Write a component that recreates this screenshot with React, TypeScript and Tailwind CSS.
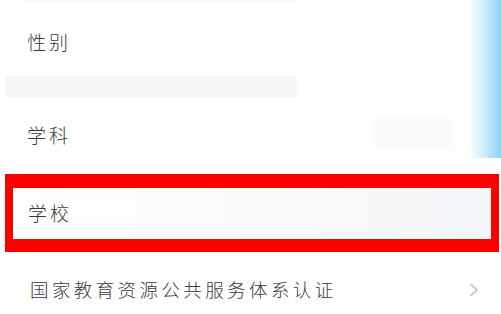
export default function App() {
    const font = { fontFamily: '"Noto Sans CJK SC", "Noto Sans", sans-serif' };
    return (
        <div className="relative w-[501px] h-[314px] overflow-hidden bg-white text-[#3a3a3a]" style={font}>
            {/* top band left from previous section */}
            <div className="ml-[25px] w-[272px] h-[2px] bg-[#f7f7f8]" />

            <div className="h-[74px] flex items-center pt-[6px] pl-[27px] text-[19px] font-light tracking-[3px]">
                性别
            </div>

            <div className="ml-[5px] w-[292px] h-[21px] bg-[#f7f7f9]" />

            <div className="relative h-[77px] flex items-center pl-[27px] text-[19px] font-light tracking-[3px]">
                学科
                <div className="absolute left-[373px] top-[21px] w-[82px] h-[32px] bg-[#fafafa] blur-[3px]" />
            </div>

            <div className="mr-[2px] ml-[5px] h-[78px] border-x-[8px] border-t-[14px] border-b-[13px] border-[#ff0000] bg-white">
                <div className="h-full flex items-center pl-[15px] text-[19px] font-light tracking-[3px] bg-gradient-to-r from-white via-[#fafafa] to-[#f4f7fa]">
                    学校
                </div>
            </div>

            <div className="h-[62px] flex items-center justify-between pt-[14px] pl-[30px] pr-[20px] text-[18.5px] font-light tracking-[3.4px]">
                <span>国家教育资源公共服务体系认证</span>
                <svg width="10" height="14" viewBox="0 0 10 14" fill="none" className="mr-[2px]">
                    <path d="M2 1.5 L8 7 L2 12.5" stroke="#c8c8c8" strokeWidth="1.8" strokeLinecap="round" strokeLinejoin="round" />
                </svg>
            </div>

            {/* blue edge bleeding in from the right */}
            <div className="absolute right-0 top-0 w-[32px] h-[158px] bg-gradient-to-r from-transparent via-[#c9ebfb] to-[#8ed3f5]" />
        </div>
    )
}
